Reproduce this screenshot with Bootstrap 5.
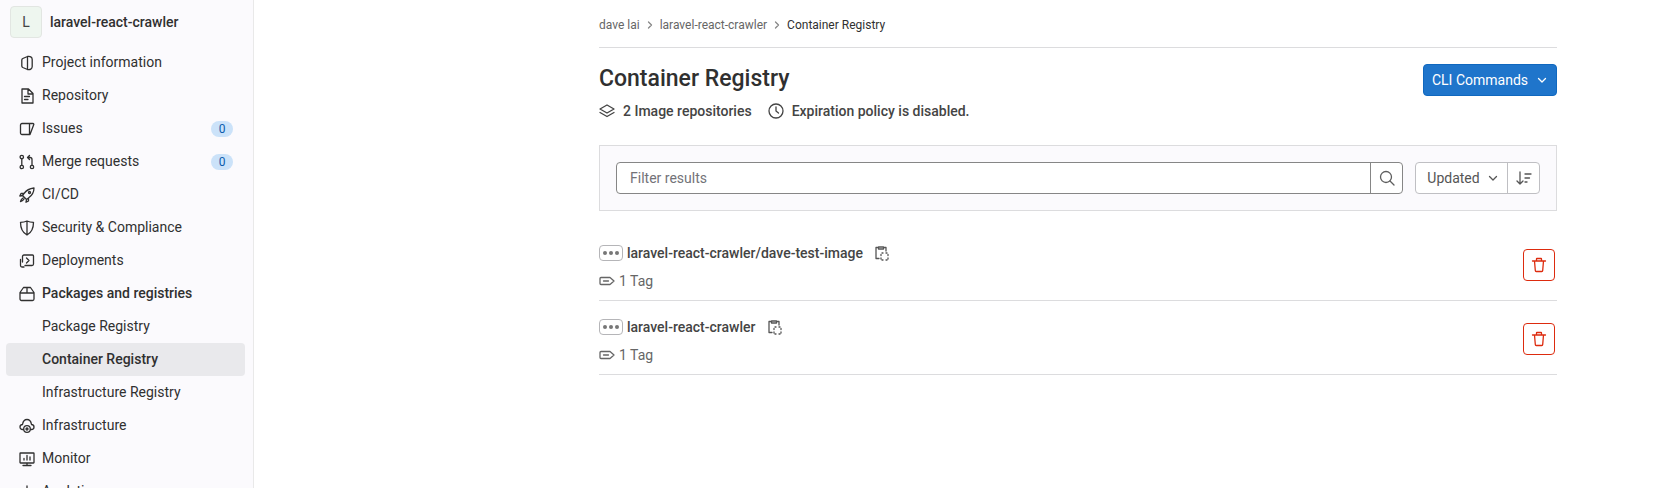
<!DOCTYPE html>
<html lang="en">
<head>
<meta charset="utf-8">
<title>Container Registry</title>
<link href="https://cdn.jsdelivr.net/npm/bootstrap@5.3.0/dist/css/bootstrap.min.css" rel="stylesheet">
<style>
html,body{height:488px;overflow:hidden;background:#fff}
body{font-family:Roboto,"Noto Sans",sans-serif;font-size:14px;color:#303030}
svg{display:block;flex:none}
.ic{width:16px;height:16px;fill:none;stroke:currentColor;stroke-width:1.3;stroke-linecap:round;stroke-linejoin:round}
.shell{height:488px}
.side{width:254px;flex:none;background:#fbfafd;border-right:1px solid #e9e9e9;height:488px;overflow:hidden}
.proj{height:46px;flex:none;padding:6px 0 0 10px;gap:8px;font-weight:500;color:#303030}
.proj-av{width:32px;height:32px;background:#eef6ef;border:1px solid #e2e6e2;border-radius:4px;font-weight:400;font-size:14px;color:#444}
.proj-t{line-height:32px}
.sd-item{height:33px;flex:none;margin:0 8px 0 6px;padding-left:13px;gap:7px;border-radius:4px;color:#303030;text-decoration:none;white-space:nowrap}
.sd-sub{padding-left:36px}
.sd-on{background:#e9e9ec;font-weight:500}
.sd-head{font-weight:500}
.cnt{margin-left:auto;margin-right:12px;width:22px;height:16px;border-radius:8px;background:#cbe2f9;color:#0b5cad;font-size:12px}
.mainp{width:958px;margin-left:345px;flex:none}
.crumb{height:48px;border-bottom:1px solid #dcdcde;font-size:12px;gap:7px;color:#666;padding-top:2px}
.crumb b{font-weight:400;color:#303030}
.crumb svg{width:6px;height:8px;color:#888}
.ttl{font-size:23px;font-weight:500;line-height:28px;margin:1px 0 0;color:#303030}
.hdr{height:83px;padding-top:16px}
.meta{font-weight:500;margin-top:8px;line-height:20px;color:#444}
.meta .m1{margin-left:8px}
.meta .m2{margin-left:16px}
.meta .m3{margin-left:8px}
.cli{background:#1f75cb;color:#fff;width:134px;height:32px;border-radius:4px;border:1px solid #1068bf;gap:8px}
.cli svg{width:12px;height:12px}
.bar{height:66px;margin-top:14px;background:#fbfafd;border:1px solid #dcdcde;padding:16px}
.srch{width:787px;height:32px;border:1px solid #868686;border-radius:4px;background:#fff}
.srch-t{flex:1;padding-left:13px;color:#737278}
.srch-b{width:32px;height:100%;border-left:1px solid #868686;color:#5e5e5e}
.srt{margin-left:auto;width:125px;height:32px;border:1px solid #bfbfc3;border-radius:4px;color:#555;background:#fff}
.srt-a{flex:1;gap:7px;height:100%;padding-left:3px}
.srt-a svg{width:12px;height:12px}
.srt-b{width:32px;height:100%;border-left:1px solid #bfbfc3}
.reglist{margin-top:16px}
.rg{height:74px;border-bottom:1px solid #dcdcde;padding-top:16px}
.rg-name{gap:4px;font-weight:500;line-height:20px;height:20px;color:#444}
.dots{width:24px;height:16px;border:1px solid #b5b5b8;border-radius:4px;gap:2px}
.dots i{width:4px;height:4px;border-radius:50%;background:#777}
.copy{margin-left:6px;color:#555}
.rg-tag{gap:4px;color:#666;margin-top:8px;line-height:20px}
.del{width:32px;height:32px;border:1px solid #dd2b0e;border-radius:4px;color:#dd2b0e;margin-right:2px;margin-top:6px}
</style>
</head>
<body>
<div class="shell d-flex">
<nav class="side d-flex flex-column">
  <div class="proj d-flex"><span class="proj-av d-flex align-items-center justify-content-center">L</span><span class="proj-t">laravel-react-crawler</span></div>
  <a class="sd-item d-flex align-items-center" href="#"><svg class="ic" viewBox="0 0 16 16"><path d="M8.500 1.500 3.800 3.500c-.6.300-1 .8-1 1.500v6c0 .7.400 1.200 1 1.500l4.700 2c2.500.7 4.700-.6 4.700-3V4.500c0-2.400-2.200-3.700-4.700-3zM8.500 1.500v13"/></svg>Project information</a>
  <a class="sd-item d-flex align-items-center" href="#"><svg class="ic" viewBox="0 0 16 16"><path d="M3 1h6.500L14 5.500V15H3zM9 1v5h5M5.500 8.500h5M5.500 11.500h3.500"/></svg>Repository</a>
  <a class="sd-item d-flex align-items-center" href="#"><svg class="ic" viewBox="0 0 16 16"><path d="M10.500 2.500v11H3c-.8 0-1.500-.7-1.500-1.500V4c0-.8.700-1.500 1.500-1.500h11c.6 0 1 .5.800 1L11 13.500"/></svg>Issues<span class="cnt d-flex align-items-center justify-content-center">0</span></a>
  <a class="sd-item d-flex align-items-center" href="#"><svg class="ic" viewBox="0 0 16 16"><circle cx="2.800" cy="3" r="1.700"/><circle cx="2.800" cy="13" r="1.700"/><circle cx="13" cy="13" r="1.700"/><path d="M2.800 5v6M13 11V5.500c0-1-.5-2-2-2H8.500M10.500 1.500l-2 2 2 2"/></svg>Merge requests<span class="cnt d-flex align-items-center justify-content-center">0</span></a>
  <a class="sd-item d-flex align-items-center" href="#"><svg class="ic" viewBox="0 0 16 16"><path d="M5 6.500C7.500 3 10.500 1.500 15 1c0 4.500-2 7.500-5.500 10l-2 1.500L3.500 8.500zM5 6.500H2L.8 9l2.700-.5M9.500 11v3L7 15.200l.5-2.700M4 11c-1 .5-2 1.500-2.500 3.500C3.500 14 4.500 13 5 12"/><circle cx="10.500" cy="5.500" r="1"/></svg>CI/CD</a>
  <a class="sd-item d-flex align-items-center" href="#"><svg class="ic" viewBox="0 0 16 16"><path d="M8 1c2 .9 4 1.300 6.500 1.300 0 6-1.900 10.400-6.500 12.700C3.400 12.700 1.500 8.300 1.500 2.300 4 2.300 6 1.900 8 1zM8 1v14"/></svg>Security &amp; Compliance</a>
  <a class="sd-item d-flex align-items-center" href="#"><svg class="ic" viewBox="0 0 16 16"><path d="M3.500 9V3.500C3.500 2.500 4.100 2 5 2h8.500c.6 0 1 .4 1 1v8c0 1-.6 1.500-1.500 1.500H6M7.500 5l2.500 2.500L7.500 10M1.500 6.500V12.500c0 1 .6 1.500 1.500 1.500h2"/></svg>Deployments</a>
  <a class="sd-item sd-head d-flex align-items-center" href="#"><svg class="ic" viewBox="0 0 16 16"><path d="M1 6.500 4.500 1.500h7l3.500 5v6.500c0 .8-.7 1.500-1.500 1.500h-11C1.700 14.500 1 13.800 1 13zM1 7h14M8 1.500V7"/></svg>Packages and registries</a>
  <a class="sd-item sd-sub d-flex align-items-center" href="#">Package Registry</a>
  <a class="sd-item sd-sub sd-on d-flex align-items-center" href="#">Container Registry</a>
  <a class="sd-item sd-sub d-flex align-items-center" href="#">Infrastructure Registry</a>
  <a class="sd-item d-flex align-items-center" href="#"><svg class="ic" viewBox="0 0 16 16"><path d="M4.500 11.500H3.500C2 11.500 1 10.200 1 9c0-1.300 1-2.400 2.500-2.500C4 3.500 6 1.500 8 1.500s4 2 4.500 5c1.500.1 2.500 1.200 2.500 2.500 0 1.200-1 2.500-2.500 2.500h-1"/><circle cx="8" cy="11" r="3.300"/><circle cx="8" cy="11" r="1"/></svg>Infrastructure</a>
  <a class="sd-item d-flex align-items-center" href="#"><svg class="ic" viewBox="0 0 16 16"><path d="M1.500 2h13c.3 0 .5.200.5.500v9c0 .3-.2.500-.5.500h-13c-.3 0-.5-.2-.5-.5v-9c0-.3.200-.5.500-.5zM8 12v2.500M4 14.500h8M5 9V7.500M8 9V4.500M11 9V6"/></svg>Monitor</a>
  <a class="sd-item d-flex align-items-center" href="#"><svg class="ic" viewBox="0 0 16 16"><path d="M4 14V8M8 14V2M12 14V5"/></svg>Analytics</a>
</nav>
<main class="mainp">
  <div class="crumb d-flex align-items-center"><span>dave lai</span><svg class="ic" viewBox="0 0 6 8"><path d="m1.500 1 3 3-3 3"/></svg><span>laravel-react-crawler</span><svg class="ic" viewBox="0 0 6 8"><path d="m1.500 1 3 3-3 3"/></svg><b>Container Registry</b></div>
  <div class="hdr d-flex justify-content-between align-items-start">
    <div>
      <h1 class="ttl">Container Registry</h1>
      <div class="meta d-flex align-items-center"><svg class="ic" viewBox="0 0 16 16"><path d="M8 2 15 6l-7 4-7-4zM1 9.500l7 4 7-4"/></svg><span class="m1">2 Image repositories</span><svg class="ic m2" viewBox="0 0 16 16"><circle cx="8" cy="8" r="7"/><path d="M8 4v4l2.500 2"/></svg><span class="m3">Expiration policy is disabled.</span></div>
    </div>
    <div class="cli d-flex align-items-center justify-content-center"><span>CLI Commands</span><svg class="ic" viewBox="0 0 12 12"><path d="m2.500 4.500 3.500 3.500 3.500-3.500"/></svg></div>
  </div>
  <div class="bar d-flex">
    <div class="srch d-flex align-items-center"><span class="srch-t">Filter results</span><span class="srch-b d-flex align-items-center justify-content-center"><svg class="ic" viewBox="0 0 16 16"><circle cx="7" cy="7" r="5.500"/><path d="m11 11 4 4"/></svg></span></div>
    <div class="srt d-flex align-items-center"><span class="srt-a d-flex align-items-center justify-content-center"><span>Updated</span><svg class="ic" viewBox="0 0 12 12"><path d="m2.500 4.500 3.500 3.500 3.500-3.500"/></svg></span><span class="srt-b d-flex align-items-center justify-content-center"><svg class="ic" viewBox="0 0 16 16"><path d="M4 2v12M1 11l3 3 3-3M9 4h6M9 8h4.500M9 12h2"/></svg></span></div>
  </div>
  <div class="reglist">
    <div class="rg d-flex justify-content-between">
      <div>
        <div class="rg-name d-flex align-items-center"><span class="dots d-flex align-items-center justify-content-center"><i></i><i></i><i></i></span><span>laravel-react-crawler/dave-test-image</span><svg class="ic copy" viewBox="0 0 16 16"><path d="M5.500 2.500H3v11h3M10.500 2.500H13V6M5.500 2h5v2h-5zM9 8h1M13 8h1M15 9.500v1M15 13v1M13 15h1M9 15h1M8 13v1M8 9.500v1"/></svg></div>
        <div class="rg-tag d-flex align-items-center"><svg class="ic" viewBox="0 0 16 16"><path d="M2 4.500h9l4 3.500-4 3.500H2c-.6 0-1-.4-1-1v-5c0-.6.4-1 1-1zM4.500 8h5"/></svg><span>1 Tag</span></div>
      </div>
      <div class="del d-flex align-items-center justify-content-center"><svg class="ic" viewBox="0 0 16 16"><path d="M1.500 4h13M3.500 4l.8 9.500c0 .6.4 1 1 1h5.400c.6 0 1-.4 1-1l.8-9.500M5.500 4V2c0-.3.200-.5.500-.5h4c.3 0 .5.200.5.500v2"/></svg></div>
    </div>
    <div class="rg d-flex justify-content-between">
      <div>
        <div class="rg-name d-flex align-items-center"><span class="dots d-flex align-items-center justify-content-center"><i></i><i></i><i></i></span><span>laravel-react-crawler</span><svg class="ic copy" viewBox="0 0 16 16"><path d="M5.500 2.500H3v11h3M10.500 2.500H13V6M5.500 2h5v2h-5zM9 8h1M13 8h1M15 9.500v1M15 13v1M13 15h1M9 15h1M8 13v1M8 9.500v1"/></svg></div>
        <div class="rg-tag d-flex align-items-center"><svg class="ic" viewBox="0 0 16 16"><path d="M2 4.500h9l4 3.500-4 3.500H2c-.6 0-1-.4-1-1v-5c0-.6.4-1 1-1zM4.500 8h5"/></svg><span>1 Tag</span></div>
      </div>
      <div class="del d-flex align-items-center justify-content-center"><svg class="ic" viewBox="0 0 16 16"><path d="M1.500 4h13M3.500 4l.8 9.500c0 .6.4 1 1 1h5.400c.6 0 1-.4 1-1l.8-9.500M5.500 4V2c0-.3.200-.5.500-.5h4c.3 0 .5.200.5.500v2"/></svg></div>
    </div>
  </div>
</main>
</div>
<script src="https://cdn.jsdelivr.net/npm/bootstrap@5.3.0/dist/js/bootstrap.bundle.min.js"></script>
</body>
</html>
